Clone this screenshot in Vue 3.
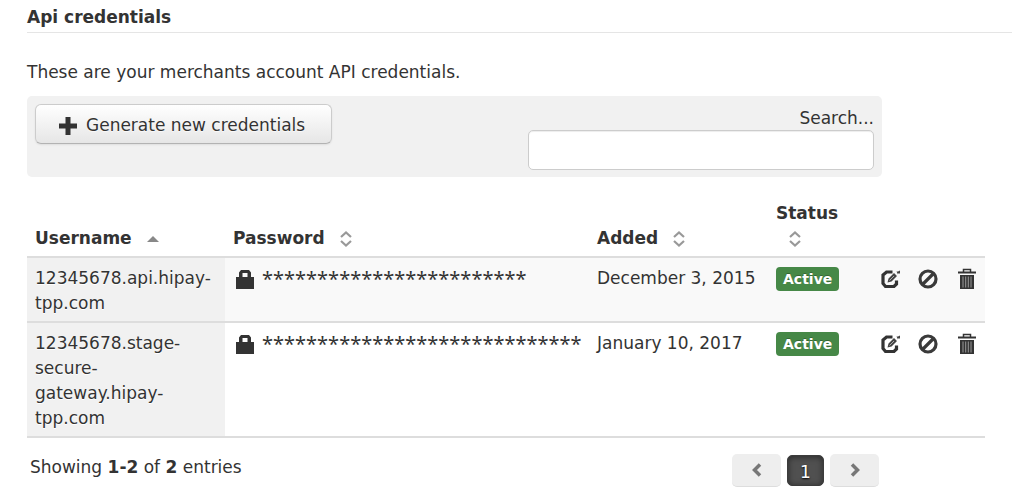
<script setup>
import { ref } from 'vue'

const search = ref('')
const columns = [
  { key: 'username', label: 'Username', sorted: true },
  { key: 'password', label: 'Password', sorted: false },
  { key: 'added', label: 'Added', sorted: false },
  { key: 'status', label: 'Status', sorted: false },
]
const rows = [
  { username: '12345678.api.hipay-tpp.com', length: 24, added: 'December 3, 2015', status: 'Active' },
  { username: '12345678.stage-secure-gateway.hipay-tpp.com', length: 29, added: 'January 10, 2017', status: 'Active' },
]
</script>

<template>
  <main class="page">
    <h1 class="title">Api credentials</h1>
    <p class="intro">These are your merchants account API credentials.</p>

    <div class="toolbar">
      <button type="button" class="generate">
        <svg width="18" height="18" viewBox="0 0 18 18" aria-hidden="true">
          <path d="M6.500 0h5v6.500h6.500v5h-6.500v6.500h-5v-6.500H0v-5h6.500z" fill="#333" />
        </svg>
        <span>Generate new credentials</span>
      </button>
      <div class="search">
        <label for="search">Search...</label>
        <input id="search" v-model="search" type="text" />
      </div>
    </div>

    <table class="grid">
      <colgroup>
        <col class="c-username" />
        <col class="c-password" />
        <col class="c-added" />
        <col class="c-status" />
        <col class="c-actions" />
      </colgroup>
      <thead>
        <tr>
          <th v-for="c in columns" :key="c.key" scope="col">
            {{ c.label }}
            <svg v-if="c.sorted" class="sort" width="12" height="16" viewBox="0 0 12 16" aria-hidden="true">
              <path d="M0 11L6 5l6 6z" fill="#888" />
            </svg>
            <svg v-else class="sort" width="12" height="16" viewBox="0 0 12 16" aria-hidden="true">
              <path d="M1 6L6 1.500l5 4.500M1 10l5 4.500L11 10" fill="none" stroke="#999" stroke-width="2.200" />
            </svg>
          </th>
          <td></td>
        </tr>
      </thead>
      <tbody>
        <tr v-for="r in rows" :key="r.username">
          <td class="username">{{ r.username }}</td>
          <td>
            <div class="secret">
              <svg width="18" height="20" viewBox="0 0 18 20" aria-hidden="true">
                <path d="M0 8h3V3.500L5 1h8l2 2.500V8H18V20H0zM6.500 8h5V4h-5z" fill="#333" fill-rule="evenodd" />
              </svg>
              <span class="mask">{{ '*'.repeat(r.length) }}</span>
            </div>
          </td>
          <td class="added">{{ r.added }}</td>
          <td><span class="badge">{{ r.status }}</span></td>
          <td>
            <div class="actions">
              <button type="button" aria-label="Edit">
                <svg width="20" height="20" viewBox="0 0 20 20">
                  <path d="M12.500 3H6.500L3 6v8.500L5.500 17.500h8.500L16.500 15v-3.500" fill="none" stroke="#333" stroke-width="3.200" />
                  <path d="M7.500 13.500l1-4 5.500-5.500 3 3-5.500 5.500zM16.500 2.500h1.500l2-1v3h-2v1z" fill="#444" />
                  <path d="M9.500 11.500l4.500-4.500" stroke="#aaa" stroke-width="1" />
                </svg>
              </button>
              <button type="button" aria-label="Disable">
                <svg width="20" height="20" viewBox="0 0 20 20">
                  <circle cx="10" cy="10" r="8" fill="none" stroke="#3a3a3a" stroke-width="3.200" />
                  <path d="M4.500 15.500l11-11" stroke="#3a3a3a" stroke-width="3.200" />
                </svg>
              </button>
              <button type="button" aria-label="Delete">
                <svg width="20" height="22" viewBox="-2 0 20 22">
                  <path d="M5.500 4V1.500h7V4" fill="none" stroke="#333" stroke-width="1.500" />
                  <path d="M0 3.500h18v2H0zM2 7h14v14H2z" fill="#333" />
                  <path d="M5 8.500v11M7.700 8.500v11M10.300 8.500v11M13 8.500v11" stroke="#999" stroke-width="1" />
                </svg>
              </button>
            </div>
          </td>
        </tr>
      </tbody>
    </table>

    <footer class="foot">
      <p>Showing <b>1-2</b> of <b>2</b> entries</p>
      <nav class="pager" aria-label="Pagination">
        <button type="button" aria-label="Previous page">
          <svg width="10" height="14" viewBox="0 0 10 14"><path d="M8 1.500L2.500 7 8 12.500" fill="none" stroke="#777" stroke-width="3.500" /></svg>
        </button>
        <button type="button" class="current" aria-current="page">1</button>
        <button type="button" aria-label="Next page">
          <svg width="10" height="14" viewBox="0 0 10 14"><path d="M2 1.500L7.500 7 2 12.500" fill="none" stroke="#777" stroke-width="3.500" /></svg>
        </button>
      </nav>
    </footer>
  </main>
</template>

<style>
body {
  background: #fff;
}
</style>

<style scoped>
.page {
  padding: 5px 0 8px 27px;
  color: #333;
  font: 17px/25px Verdana, "DejaVu Sans", sans-serif;
}
.page * {
  box-sizing: border-box;
}
.title {
  margin: 0;
  padding-bottom: 2px;
  border-bottom: 1px solid #e5e5e5;
  font-size: 17px;
  line-height: 25px;
}
.intro {
  margin: 27px 0 11px;
}
button {
  font: inherit;
  color: inherit;
  cursor: pointer;
}
svg {
  display: block;
  flex: none;
}
.toolbar {
  display: flex;
  justify-content: space-between;
  align-items: flex-start;
  margin-right: 130px;
  padding: 8px 8px 7px;
  border-radius: 5px;
  background: #f1f1f1;
}
.generate {
  display: flex;
  align-items: center;
  gap: 9px;
  height: 40px;
  padding: 3px 26px 0 23px;
  border: 1px solid #ccc;
  border-bottom-color: #b3b3b3;
  border-radius: 6px;
  background: linear-gradient(#fff, #e6e6e6);
  box-shadow: 0 1px 2px rgba(0, 0, 0, 0.08);
  text-shadow: 0 1px 1px rgba(255, 255, 255, 0.75);
}
.search {
  width: 346px;
}
.search label {
  display: block;
  padding-top: 2px;
  line-height: 24px;
  text-align: right;
}
.search input {
  display: block;
  width: 100%;
  height: 40px;
  padding: 5px 8px;
  border: 1px solid #ccc;
  border-radius: 5px;
  background: #fff;
  box-shadow: inset 0 1px 1px rgba(0, 0, 0, 0.075);
  font: inherit;
  color: inherit;
}
.grid {
  width: calc(100% - 27px);
  margin-top: 16px;
  border-collapse: separate;
  border-spacing: 0;
  table-layout: fixed;
}
.c-username { width: 198px; }
.c-password { width: 364px; }
.c-added { width: 179px; }
.c-status { width: 104px; }
.grid th,
.grid td {
  padding: 8px 8px 5px;
  border-bottom: 2px solid #ddd;
  text-align: left;
  vertical-align: top;
}
.grid th {
  vertical-align: bottom;
  font-weight: bold;
}
.sort {
  display: inline-block;
  margin: 0 20px 0 9px;
  vertical-align: -3px;
}
.grid th:nth-child(4) .sort {
  margin: 0 13px;
}
.grid tbody tr:nth-child(odd) {
  background: #f9f9f9;
}
.grid .username {
  background: #f1f1f1;
  text-shadow: 0 1px 0 #fff;
}
.added {
  white-space: nowrap;
}
.secret {
  display: flex;
  gap: 8px;
  padding: 3px 0 0 3px;
}
.mask {
  height: 20px;
  font-family: "Noto Sans", "Open Sans", sans-serif;
  font-size: 20px;
  line-height: 20px;
}
.badge {
  display: inline-block;
  padding: 0 7px;
  border-radius: 4px;
  background: #468847;
  color: #fff;
  font-size: 14px;
  font-weight: bold;
  line-height: 24px;
  text-shadow: 0 -1px 0 rgba(0, 0, 0, 0.25);
}
.actions {
  display: flex;
  align-items: center;
  gap: 18px;
  height: 25px;
}
.actions button {
  padding: 0;
  border: 0;
  background: none;
}
.foot {
  display: flex;
  justify-content: space-between;
  margin: 16px 133px 0 3px;
}
.foot p {
  margin: 0;
  padding-top: 1px;
}
.pager {
  display: flex;
  align-items: center;
  gap: 6px;
}
.pager button {
  display: flex;
  align-items: center;
  justify-content: center;
  width: 49px;
  height: 33px;
  padding: 0;
  border: 0;
  border-bottom: 1px solid #ddd;
  border-radius: 5px;
  background: #eee;
}
.pager .current {
  width: 37px;
  height: 31px;
  padding-top: 3px;
  border: 1px solid #3c3c3c;
  background: #505050;
  box-shadow: inset 0 1px 6px rgba(0, 0, 0, 0.5);
  color: #fff;
  text-shadow: 0 1px 2px #000;
}
</style>
